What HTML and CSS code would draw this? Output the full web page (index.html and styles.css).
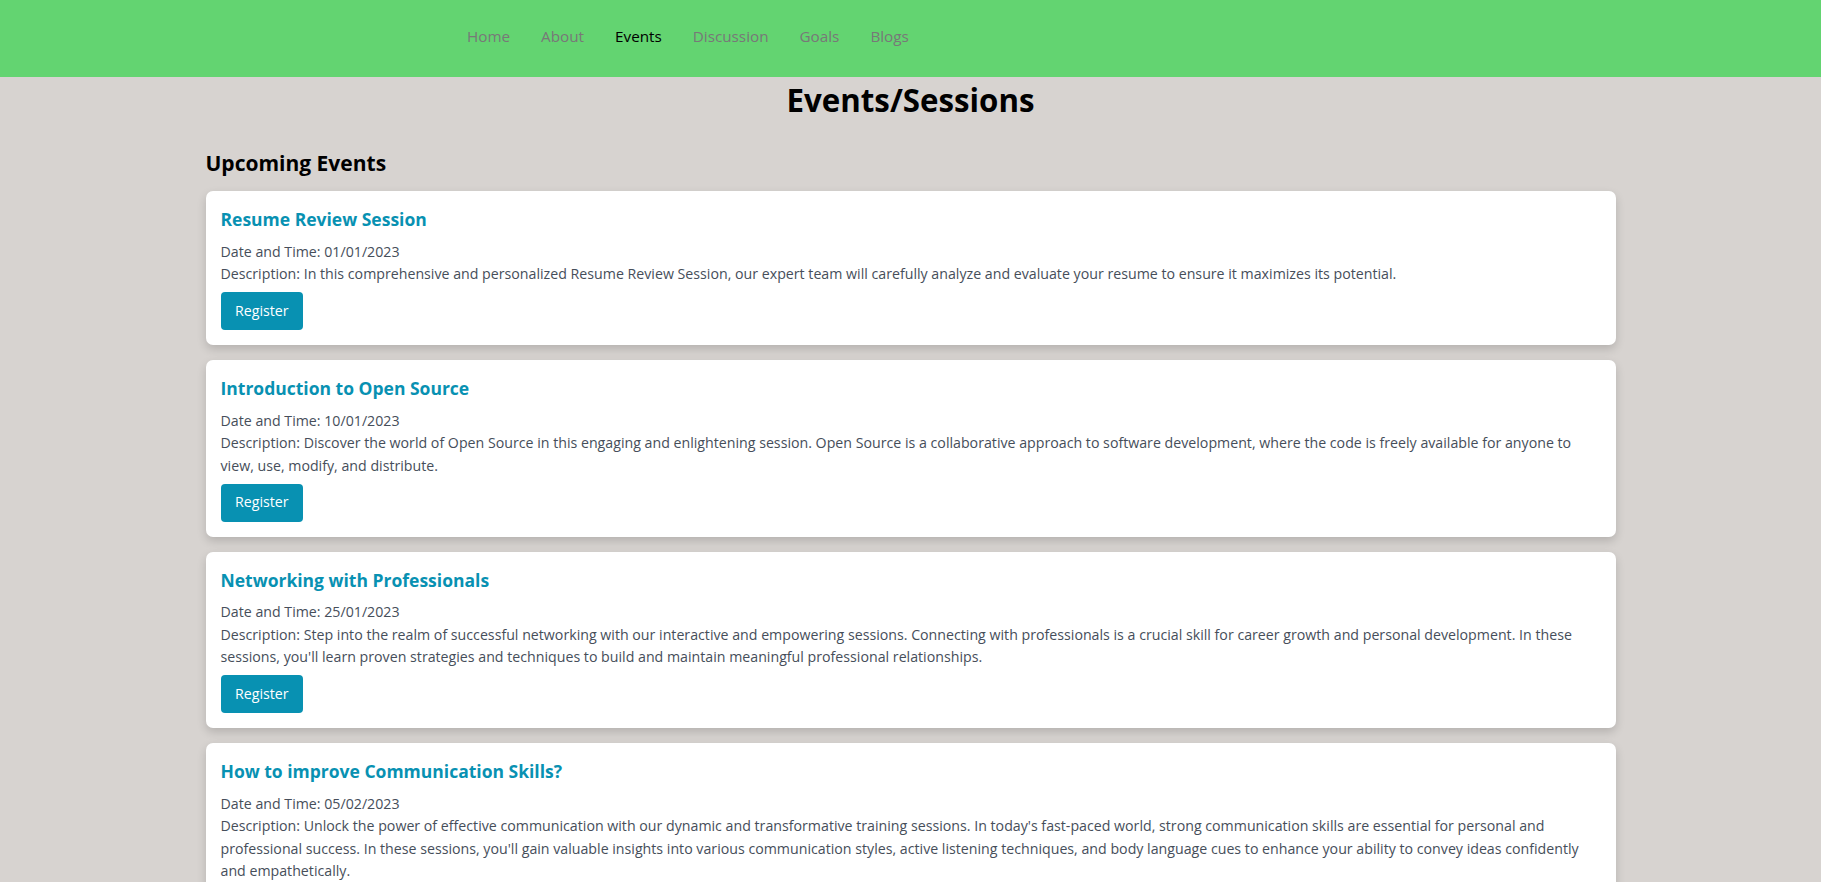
FILE: index.html
```html
<!DOCTYPE html>
<html lang="en">
<head>
<meta charset="utf-8">
<title>Events/Sessions</title>
<link rel="stylesheet" href="styles.css">
</head>
<body>
<header class="topbar">
  <nav class="nav">
    <a class="nav-link" href="#">Home</a>
    <a class="nav-link" href="#">About</a>
    <a class="nav-link active" href="#">Events</a>
    <a class="nav-link" href="#">Discussion</a>
    <a class="nav-link" href="#">Goals</a>
    <a class="nav-link" href="#">Blogs</a>
  </nav>
</header>
<main class="page">
  <h1 class="page-title">Events/Sessions</h1>
  <section class="events">
    <h2 class="section-title">Upcoming Events</h2>
    <div class="event-list">
      <article class="card">
        <h3 class="card-title">Resume Review Session</h3>
        <p class="card-text">Date and Time: 01/01/2023</p>
        <p class="card-text">Description: In this comprehensive and personalized Resume Review Session, our expert team will carefully analyze and evaluate your resume to ensure it maximizes its potential.</p>
        <button class="btn" type="button">Register</button>
      </article>
      <article class="card">
        <h3 class="card-title">Introduction to Open Source</h3>
        <p class="card-text">Date and Time: 10/01/2023</p>
        <p class="card-text">Description: Discover the world of Open Source in this engaging and enlightening session. Open Source is a collaborative approach to software development, where the code is freely available for anyone to view, use, modify, and distribute.</p>
        <button class="btn" type="button">Register</button>
      </article>
      <article class="card">
        <h3 class="card-title">Networking with Professionals</h3>
        <p class="card-text">Date and Time: 25/01/2023</p>
        <p class="card-text">Description: Step into the realm of successful networking with our interactive and empowering sessions. Connecting with professionals is a crucial skill for career growth and personal development. In these sessions, you'll learn proven strategies and techniques to build and maintain meaningful professional relationships.</p>
        <button class="btn" type="button">Register</button>
      </article>
      <article class="card">
        <h3 class="card-title">How to improve Communication Skills?</h3>
        <p class="card-text">Date and Time: 05/02/2023</p>
        <p class="card-text">Description: Unlock the power of effective communication with our dynamic and transformative training sessions. In today's fast-paced world, strong communication skills are essential for personal and professional success. In these sessions, you'll gain valuable insights into various communication styles, active listening techniques, and body language cues to enhance your ability to convey ideas confidently and empathetically.</p>
        <button class="btn" type="button">Register</button>
      </article>
    </div>
  </section>
</main>
</body>
</html>
```
FILE: styles.css
```css
* { box-sizing: border-box; }

html, body {
  margin: 0;
  padding: 0;
}

body {
  background: #d7d3d0;
  font-family: "Open Sans", "Noto Sans", sans-serif;
  font-size: 14.2px;
  color: #464e5a;
}

.topbar {
  background: #63d471;
  height: 77px;
  display: flex;
  align-items: center;
}

.nav {
  display: flex;
  gap: 31px;
  padding-left: 467px;
  margin-top: -5px;
}

.nav-link {
  font-size: 15.25px;
  color: #787878;
  text-decoration: none;
}

.nav-link.active {
  color: #000;
}

.page {
  width: 1410px;
  margin: 0 auto;
}

.page-title {
  margin: 2px 0 0;
  text-align: center;
  font-size: 31.25px;
  font-weight: 700;
  color: #000;
}

.section-title {
  margin: 28px 0 14px;
  font-size: 21px;
  font-weight: 700;
  color: #000;
}

.event-list {
  display: flex;
  flex-direction: column;
  gap: 15px;
}

.card {
  background: #fff;
  border-radius: 7px;
  padding: 16px 15px 15px;
  box-shadow: 0 4px 10px rgba(0, 0, 0, 0.16);
}

.card-title {
  margin: 0 0 9.5px;
  font-size: 17.5px;
  font-weight: 700;
  color: #0891b2;
}

.card-text {
  margin: 0;
  line-height: 22.5px;
}

.btn {
  display: block;
  margin-top: 6.5px;
  padding: 7.75px 14.5px;
  font-family: inherit;
  font-size: 14.2px;
  line-height: 22.5px;
  color: #fff;
  background: #0891b2;
  border: none;
  border-radius: 4px;
  cursor: pointer;
}
```
